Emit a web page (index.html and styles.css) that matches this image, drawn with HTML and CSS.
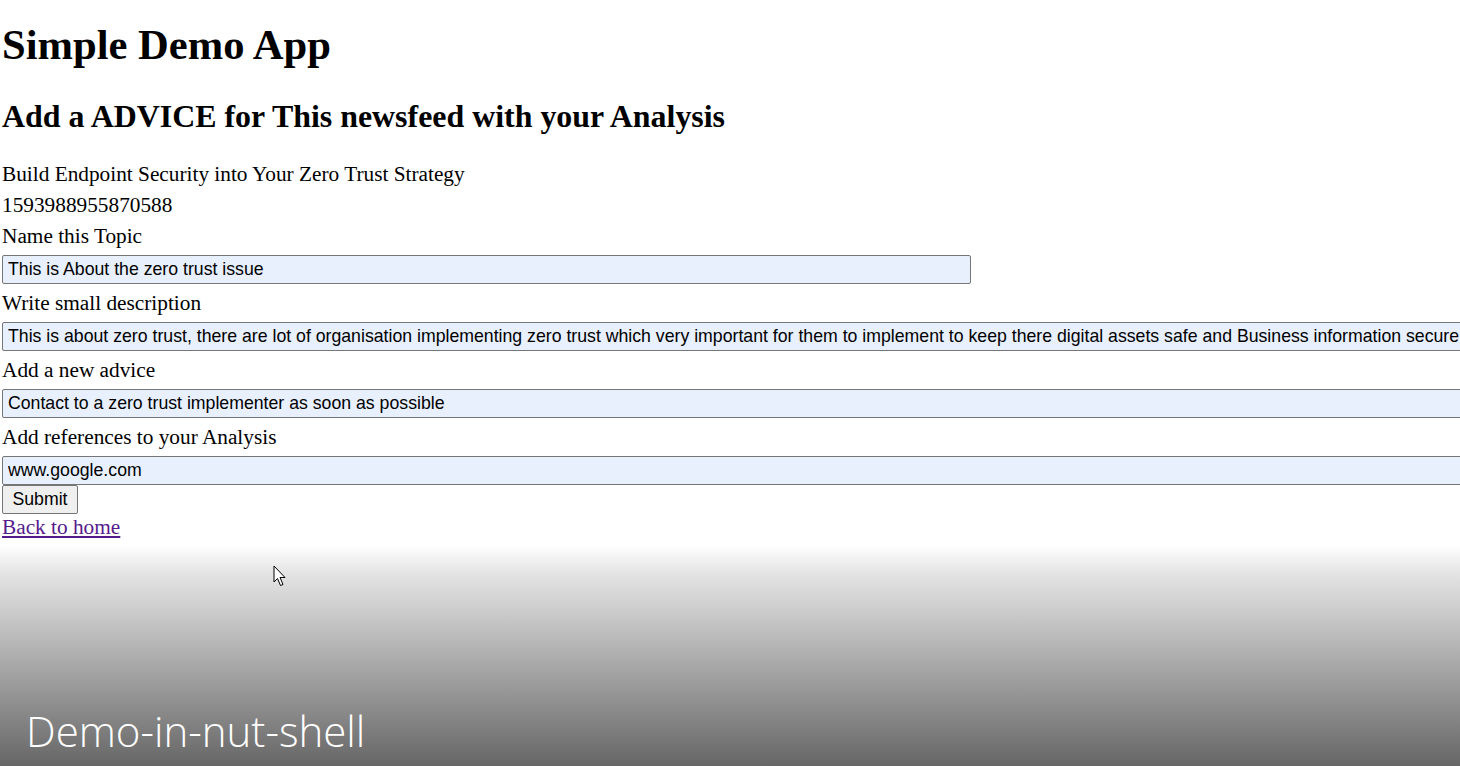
FILE: index.html
```html
<!DOCTYPE html>
<html>
<head>
<meta charset="utf-8">
<title>Simple Demo App</title>
<link rel="stylesheet" href="styles.css">
</head>
<body>
<main class="page">
  <h1 class="title">Simple Demo App</h1>
  <h2 class="subtitle">Add a ADVICE for This newsfeed with your Analysis</h2>
  <div class="info">Build Endpoint Security into Your Zero Trust Strategy</div>
  <div class="info id">1593988955870588</div>
  <form class="form">
    <div class="field">
      <label class="label">Name this Topic</label>
      <input class="input short" type="text" value="This is About the zero trust issue">
    </div>
    <div class="field">
      <label class="label">Write small description</label>
      <input class="input wide" type="text" value="This is about zero trust, there are lot of organisation implementing zero trust which very important for them to implement to keep there digital assets safe and Business information secure">
    </div>
    <div class="field">
      <label class="label">Add a new advice</label>
      <input class="input wide" type="text" value="Contact to a zero trust implementer as soon as possible">
    </div>
    <div class="field last">
      <label class="label">Add references to your Analysis</label>
      <input class="input wide" type="text" value="www.google.com">
    </div>
    <button class="submit" type="button">Submit</button>
  </form>
  <a class="home" href="#">Back to home</a>
</main>
<div class="overlay">
  <div class="caption">Demo-in-nut-shell</div>
</div>
<svg class="cursor" width="14" height="22" viewBox="0 0 14 22">
  <path d="M1 1 L1 17 L4.5 13.5 L7.5 20.5 L10 19.5 L7 12.5 L12 12.5 Z" fill="#fff" stroke="#000" stroke-width="1" stroke-linejoin="miter"/>
</svg>
</body>
</html>
```

FILE: styles.css
```css
html, body {
  margin: 0;
  padding: 0;
  background: #fff;
  overflow: hidden;
  height: 766px;
}
body {
  position: relative;
  font-family: "Liberation Serif", "Times New Roman", serif;
  color: #000;
}
.page {
  padding: 0 2px;
  font-size: 21.3px;
}
.title {
  margin: 20px 0 0;
  font-size: 42.6px;
  line-height: 50px;
  font-weight: bold;
}
.subtitle {
  margin: 27px 0 0;
  font-size: 31.9px;
  line-height: 40px;
  font-weight: bold;
}
.info {
  line-height: 31px;
}
.subtitle + .info {
  margin-top: 21.5px;
}
.info.id {
  line-height: 30px;
}
.form {
  margin: 0;
}
.field {
  display: flex;
  flex-direction: column;
  align-items: flex-start;
  margin-bottom: 3px;
}
.field.last {
  margin-bottom: 0;
}
.label {
  line-height: 31px;
  padding-top: 1px;
  margin-bottom: 3px;
}
.input {
  box-sizing: border-box;
  height: 29px;
  margin: 0;
  padding: 1px 5px;
  border: 1px solid #767676;
  border-radius: 2px;
  background: #e8f0fe;
  color: #000;
  font-family: "Liberation Sans", Arial, sans-serif;
  font-size: 17.7px;
}
.short {
  width: 969px;
}
.wide {
  width: calc(100% + 40px);
}
.submit {
  display: block;
  box-sizing: border-box;
  height: 29px;
  width: 76px;
  margin: 0;
  padding: 1px 6px;
  border: 1px solid #767676;
  border-radius: 2px;
  background: #efefef;
  color: #000;
  font-family: "Liberation Sans", Arial, sans-serif;
  font-size: 17.7px;
}
.home {
  display: inline-block;
  line-height: 24px;
  margin-top: 1px;
  color: #551a8b;
  text-decoration: underline;
}
.overlay {
  position: absolute;
  left: 0;
  right: 0;
  top: 545px;
  height: 221px;
  background: linear-gradient(to bottom, rgba(0,0,0,0) 0%, rgba(0,0,0,0.1) 12%, rgba(0,0,0,0.6) 100%);
}
.caption {
  position: absolute;
  left: 26px;
  bottom: 10px;
  color: #fff;
  font-family: "Open Sans", "Noto Sans", sans-serif;
  font-weight: 300;
  font-size: 42px;
  line-height: 50px;
}
.cursor {
  position: absolute;
  left: 273px;
  top: 565px;
}
```
